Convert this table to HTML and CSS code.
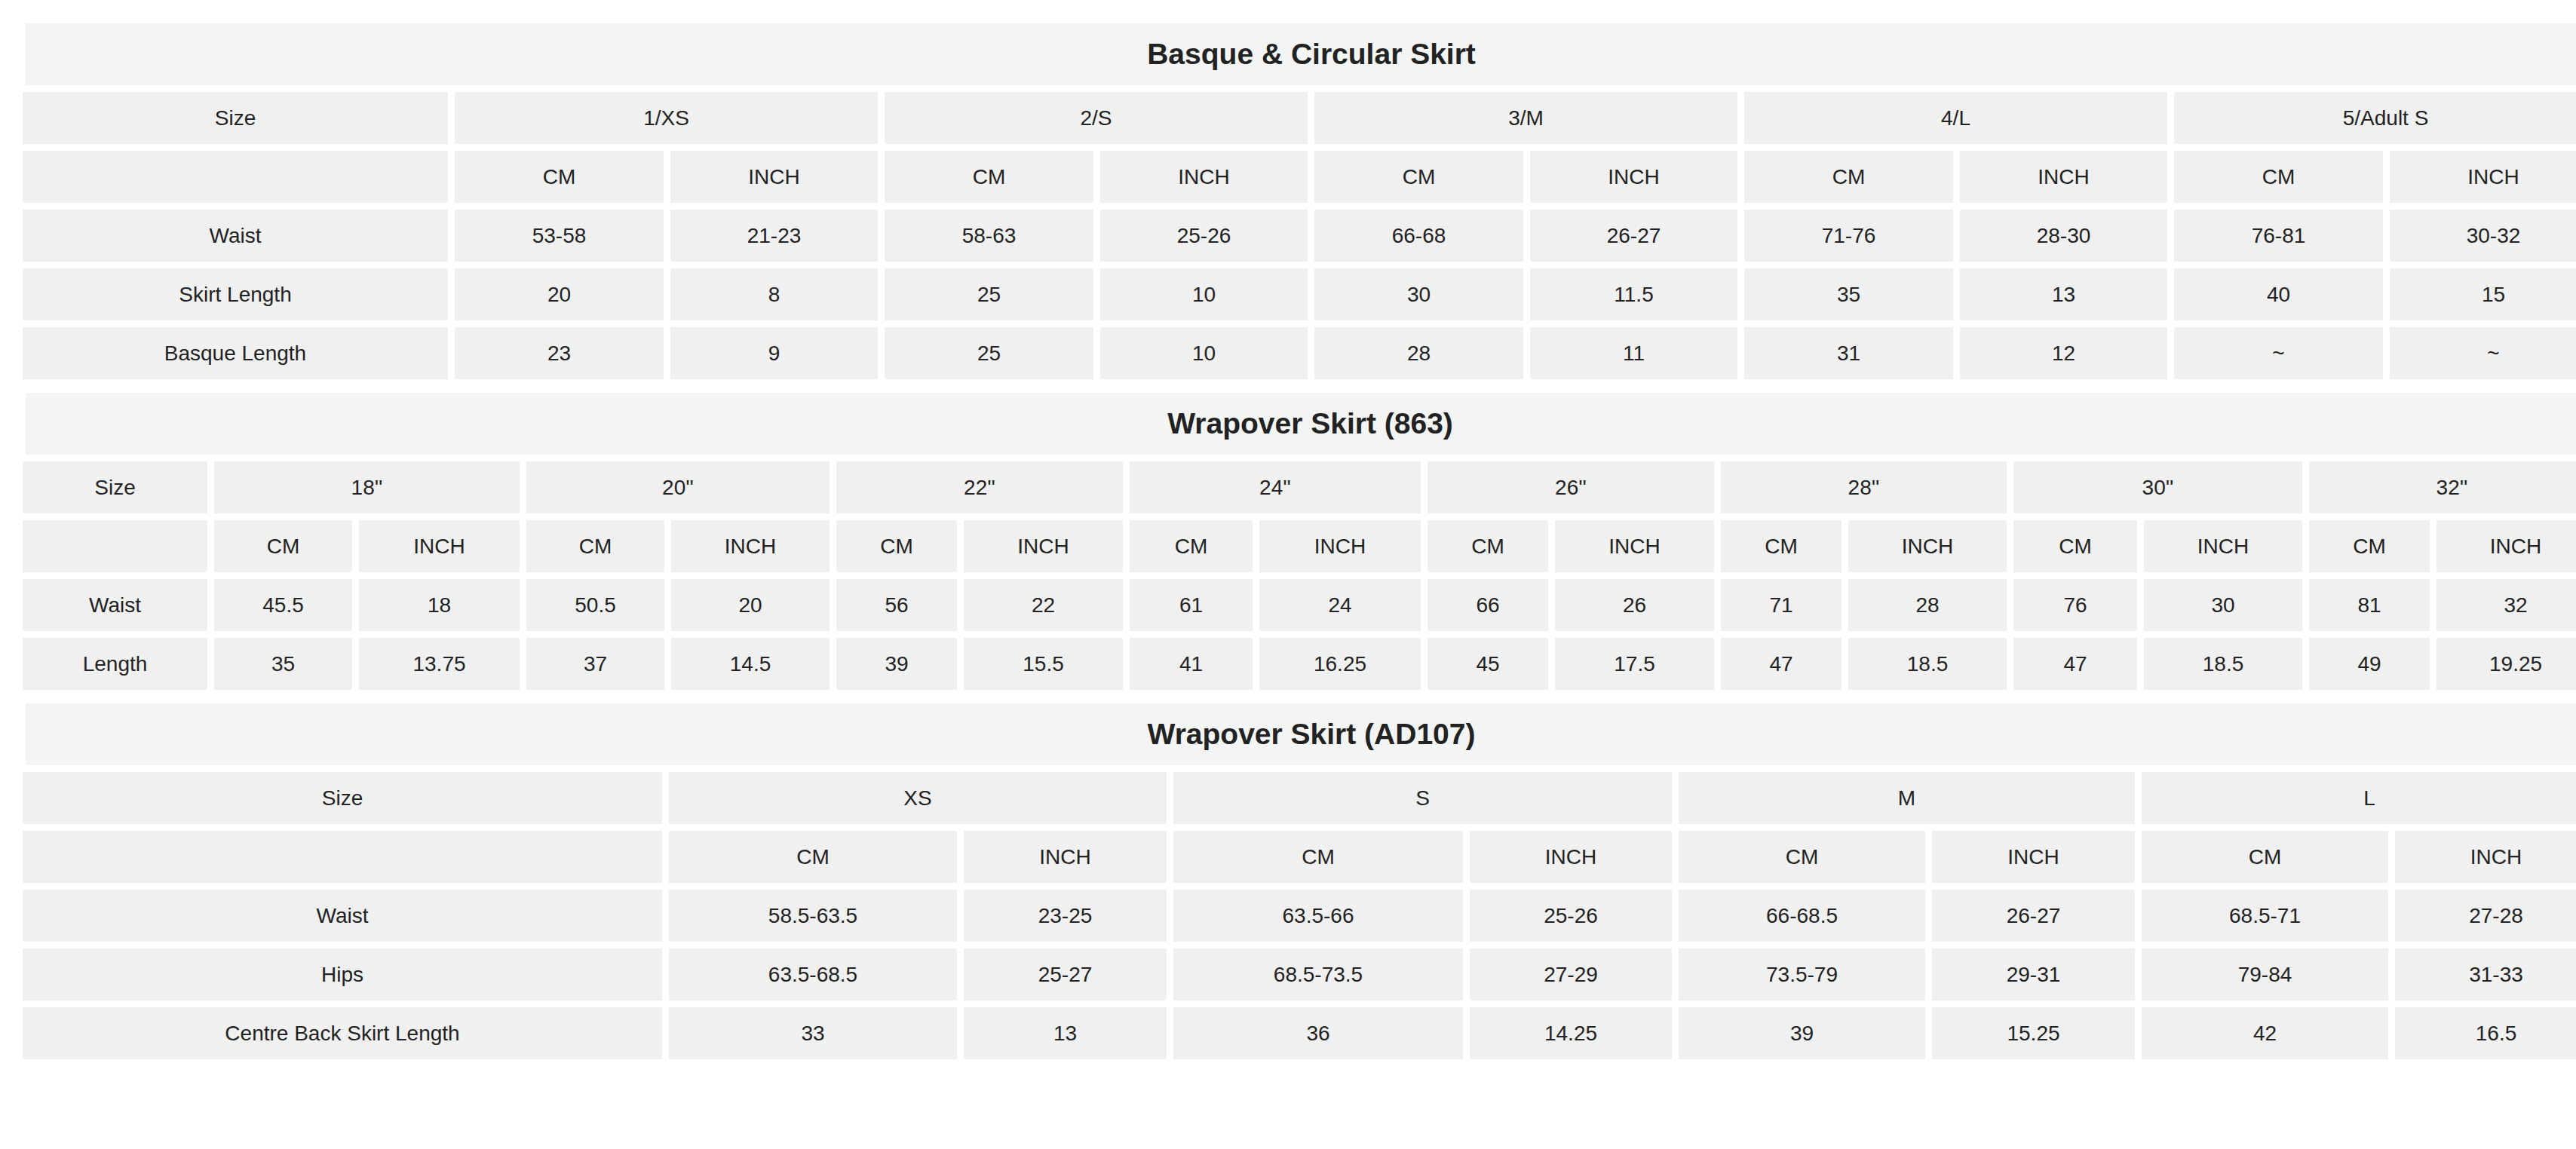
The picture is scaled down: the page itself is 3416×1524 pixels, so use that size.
FILE: index.html
```html
<!DOCTYPE html>
<html lang="en">
<head>
<meta charset="utf-8">
<title>Size Charts</title>
<link rel="stylesheet" href="styles.css">
</head>
<body>
<table class="chart t1">
  <colgroup><col><col><col><col><col><col><col><col><col><col><col></colgroup>
  <tr><th colspan="11" class="head"><div class="title">Basque &amp; Circular Skirt</div></th></tr>
  <tr><td>Size</td><td colspan="2">1/XS</td><td colspan="2">2/S</td><td colspan="2">3/M</td><td colspan="2">4/L</td><td colspan="2">5/Adult S</td></tr>
  <tr><td></td><td>CM</td><td>INCH</td><td>CM</td><td>INCH</td><td>CM</td><td>INCH</td><td>CM</td><td>INCH</td><td>CM</td><td>INCH</td></tr>
  <tr><td>Waist</td><td>53-58</td><td>21-23</td><td>58-63</td><td>25-26</td><td>66-68</td><td>26-27</td><td>71-76</td><td>28-30</td><td>76-81</td><td>30-32</td></tr>
  <tr><td>Skirt Length</td><td>20</td><td>8</td><td>25</td><td>10</td><td>30</td><td>11.5</td><td>35</td><td>13</td><td>40</td><td>15</td></tr>
  <tr><td>Basque Length</td><td>23</td><td>9</td><td>25</td><td>10</td><td>28</td><td>11</td><td>31</td><td>12</td><td>~</td><td>~</td></tr>
</table>
<table class="chart t2">
  <colgroup><col><col><col><col><col><col><col><col><col><col><col><col><col><col><col><col><col></colgroup>
  <tr><th colspan="17" class="head"><div class="title">Wrapover Skirt (863)</div></th></tr>
  <tr><td>Size</td><td colspan="2">18''</td><td colspan="2">20''</td><td colspan="2">22''</td><td colspan="2">24''</td><td colspan="2">26''</td><td colspan="2">28''</td><td colspan="2">30''</td><td colspan="2">32''</td></tr>
  <tr><td></td><td>CM</td><td>INCH</td><td>CM</td><td>INCH</td><td>CM</td><td>INCH</td><td>CM</td><td>INCH</td><td>CM</td><td>INCH</td><td>CM</td><td>INCH</td><td>CM</td><td>INCH</td><td>CM</td><td>INCH</td></tr>
  <tr><td>Waist</td><td>45.5</td><td>18</td><td>50.5</td><td>20</td><td>56</td><td>22</td><td>61</td><td>24</td><td>66</td><td>26</td><td>71</td><td>28</td><td>76</td><td>30</td><td>81</td><td>32</td></tr>
  <tr><td>Length</td><td>35</td><td>13.75</td><td>37</td><td>14.5</td><td>39</td><td>15.5</td><td>41</td><td>16.25</td><td>45</td><td>17.5</td><td>47</td><td>18.5</td><td>47</td><td>18.5</td><td>49</td><td>19.25</td></tr>
</table>
<table class="chart t3">
  <colgroup><col><col><col><col><col><col><col><col><col></colgroup>
  <tr><th colspan="9" class="head"><div class="title">Wrapover Skirt (AD107)</div></th></tr>
  <tr><td>Size</td><td colspan="2">XS</td><td colspan="2">S</td><td colspan="2">M</td><td colspan="2">L</td></tr>
  <tr><td></td><td>CM</td><td>INCH</td><td>CM</td><td>INCH</td><td>CM</td><td>INCH</td><td>CM</td><td>INCH</td></tr>
  <tr><td>Waist</td><td>58.5-63.5</td><td>23-25</td><td>63.5-66</td><td>25-26</td><td>66-68.5</td><td>26-27</td><td>68.5-71</td><td>27-28</td></tr>
  <tr><td>Hips</td><td>63.5-68.5</td><td>25-27</td><td>68.5-73.5</td><td>27-29</td><td>73.5-79</td><td>29-31</td><td>79-84</td><td>31-33</td></tr>
  <tr><td>Centre Back Skirt Length</td><td>33</td><td>13</td><td>36</td><td>14.25</td><td>39</td><td>15.25</td><td>42</td><td>16.5</td></tr>
</table>
</body>
</html>
```
FILE: styles.css
```css
html, body {
  overflow: hidden;
}
body {
  margin: 0;
  padding: 22px 0 0 21px;
  background: #ffffff;
  font-family: "Liberation Sans", Arial, Helvetica, sans-serif;
  color: #222222;
}
.chart {
  table-layout: fixed;
  border-collapse: separate;
  border-spacing: 9px;
}
.chart td {
  height: 69px;
  padding: 0;
  background: #f0f0f0;
  text-align: center;
  vertical-align: middle;
  font-size: 28px;
  font-weight: normal;
  white-space: nowrap;
}
.chart th.head {
  padding: 0;
}
.title {
  margin-left: 4px;
  height: 82px;
  display: flex;
  align-items: center;
  justify-content: center;
  background: #f3f5f5;
  font-size: 39px;
  font-weight: bold;
  color: #222222;
}

/* Table 1: Basque & Circular Skirt */
.t1 { width: 3432px; }
.t1 col { width: 277px; }
.t1 col:nth-child(odd) { width: 275px; }
.t1 col:first-child { width: 564px; }

/* Table 2: Wrapover Skirt (863) */
.t2 { width: 3429px; }
.t2 col:nth-child(1) { width: 245px; }
.t2 col:nth-child(2) { width: 183px; }
.t2 col:nth-child(3) { width: 213px; }
.t2 col:nth-child(4) { width: 183px; }
.t2 col:nth-child(5) { width: 210px; }
.t2 col:nth-child(6) { width: 160px; }
.t2 col:nth-child(7) { width: 211px; }
.t2 col:nth-child(8) { width: 163px; }
.t2 col:nth-child(9) { width: 214px; }
.t2 col:nth-child(10) { width: 160px; }
.t2 col:nth-child(11) { width: 211px; }
.t2 col:nth-child(12) { width: 160px; }
.t2 col:nth-child(13) { width: 210px; }
.t2 col:nth-child(14) { width: 164px; }
.t2 col:nth-child(15) { width: 210px; }
.t2 col:nth-child(16) { width: 160px; }
.t2 col:nth-child(17) { width: 210px; }

/* Table 3: Wrapover Skirt (AD107) */
.t3 { width: 3432px; }
.t3 col:nth-child(1) { width: 848px; }
.t3 col:nth-child(2) { width: 382px; }
.t3 col:nth-child(3) { width: 269px; }
.t3 col:nth-child(4) { width: 384px; }
.t3 col:nth-child(5) { width: 268px; }
.t3 col:nth-child(6) { width: 327px; }
.t3 col:nth-child(7) { width: 269px; }
.t3 col:nth-child(8) { width: 327px; }
.t3 col:nth-child(9) { width: 268px; }
```
